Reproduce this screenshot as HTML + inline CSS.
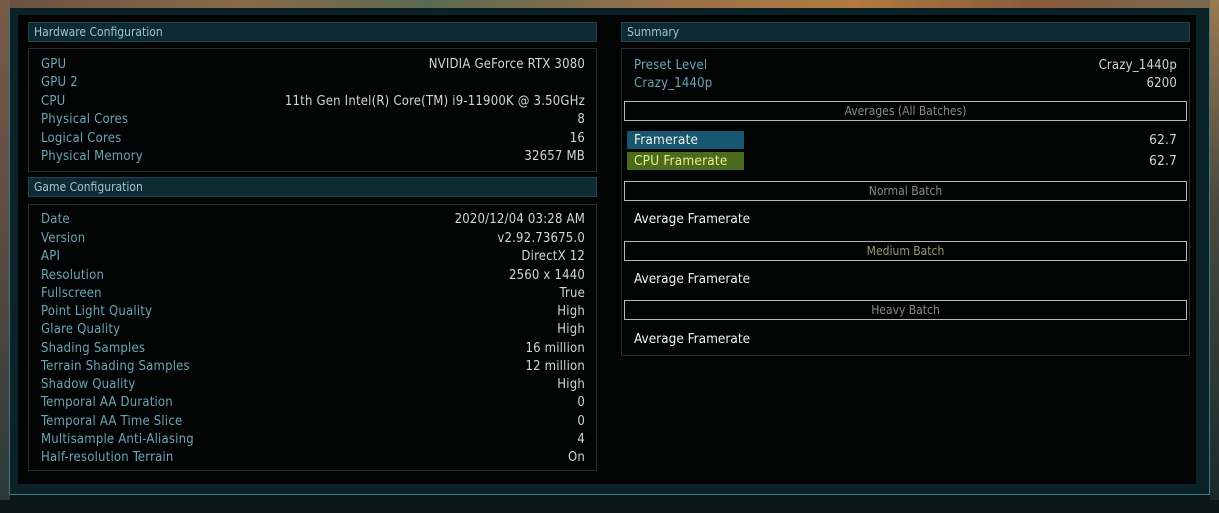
<!DOCTYPE html>
<html><head><meta charset="utf-8"><style>
*{margin:0;padding:0;box-sizing:border-box}
body{width:1219px;height:513px;overflow:hidden;background:#0a171b;font-family:"DejaVu Sans Condensed","Liberation Sans",sans-serif;font-size:13px;position:relative}
.abs{position:absolute}
.top{left:0;top:0;width:1219px;height:9px;background:linear-gradient(90deg,#6a5040,#8a6a48 20%,#5a6a50 35%,#9a7048 55%,#b07a40 70%,#8a5a3a 85%,#7a6a50)}
.lft{left:0;top:0;width:10px;height:500px;background:linear-gradient(#7a5a48,#5a4a40 50%,#2a3a3a)}
.rgt{left:1210px;top:0;width:9px;height:500px;background:linear-gradient(#9a7a50,#4a4a40 40%,#1a2a2a)}
.frame{left:9px;top:8px;width:1201px;height:487px;background:#0a2228;border:1px solid #3d7a82;border-top:none}
.inner{left:18px;top:15px;width:1178px;height:469px;background:#020303}
.hdr{height:20px;background:#0e2a32;border:1px solid #1f4650;color:#9cc4cf;font-size:12px;line-height:18px;padding-left:5px}
.box{border:1px solid #252e31}
.row{position:absolute;height:18px;line-height:18px;color:#6aa6b6;letter-spacing:0.2px}
.row span{position:absolute;right:0;color:#d4d4d4}
.bb{position:absolute;left:624px;width:563px;height:20px;border:1px solid #b8b8b8;text-align:center;line-height:18px;color:#8a8a8a;font-size:12px}
.af{position:absolute;left:634px;color:#f2f2f2;font-size:13.5px}
</style></head><body>
<div class="abs top"></div><div class="abs lft"></div><div class="abs rgt"></div>
<div class="abs frame"></div>
<div class="abs inner"></div>

<div class="abs hdr" style="left:28px;top:22px;width:569px">Hardware Configuration</div>
<div class="abs box" style="left:28px;top:48px;width:569px;height:124px"></div>
<div class="abs hdr" style="left:28px;top:177px;width:569px">Game Configuration</div>
<div class="abs box" style="left:28px;top:204px;width:569px;height:267px"></div>

<div class="abs hdr" style="left:621px;top:22px;width:569px">Summary</div>
<div class="abs box" style="left:621px;top:48px;width:569px;height:308px"></div>

<div class="row" style="left:41px;top:56px;width:544px">GPU<span>NVIDIA GeForce RTX 3080</span></div>
<div class="row" style="left:41px;top:74px;width:544px">GPU 2<span></span></div>
<div class="row" style="left:41px;top:93px;width:544px">CPU<span>11th Gen Intel(R) Core(TM) i9-11900K @ 3.50GHz</span></div>
<div class="row" style="left:41px;top:111px;width:544px">Physical Cores<span>8</span></div>
<div class="row" style="left:41px;top:130px;width:544px">Logical Cores<span>16</span></div>
<div class="row" style="left:41px;top:148px;width:544px">Physical Memory<span>32657 MB</span></div>

<div class="row" style="left:41px;top:211px;width:544px">Date<span>2020/12/04 03:28 AM</span></div>
<div class="row" style="left:41px;top:230px;width:544px">Version<span>v2.92.73675.0</span></div>
<div class="row" style="left:41px;top:248px;width:544px">API<span>DirectX 12</span></div>
<div class="row" style="left:41px;top:267px;width:544px">Resolution<span>2560 x 1440</span></div>
<div class="row" style="left:41px;top:285px;width:544px">Fullscreen<span>True</span></div>
<div class="row" style="left:41px;top:303px;width:544px">Point Light Quality<span>High</span></div>
<div class="row" style="left:41px;top:321px;width:544px">Glare Quality<span>High</span></div>
<div class="row" style="left:41px;top:340px;width:544px">Shading Samples<span>16 million</span></div>
<div class="row" style="left:41px;top:358px;width:544px">Terrain Shading Samples<span>12 million</span></div>
<div class="row" style="left:41px;top:376px;width:544px">Shadow Quality<span>High</span></div>
<div class="row" style="left:41px;top:394px;width:544px">Temporal AA Duration<span>0</span></div>
<div class="row" style="left:41px;top:413px;width:544px">Temporal AA Time Slice<span>0</span></div>
<div class="row" style="left:41px;top:431px;width:544px">Multisample Anti-Aliasing<span>4</span></div>
<div class="row" style="left:41px;top:449px;width:544px">Half-resolution Terrain<span>On</span></div>

<div class="row" style="left:634px;top:57px;width:543px">Preset Level<span>Crazy_1440p</span></div>
<div class="row" style="left:634px;top:75px;width:543px">Crazy_1440p<span>6200</span></div>
<div class="bb" style="top:101px">Averages (All Batches)</div>
<div class="abs" style="left:627px;top:131px;width:117px;height:18px;background:#17566e"></div>
<div class="abs" style="left:627px;top:152px;width:117px;height:18px;background:#4a6a1e"></div>
<div class="row" style="left:634px;top:131px;width:543px;color:#f0f0f0;font-size:13.5px">Framerate<span>62.7</span></div>
<div class="row" style="left:634px;top:152px;width:543px;color:#e8f08a;font-size:13.5px">CPU Framerate<span>62.7</span></div>
<div class="bb" style="top:181px">Normal Batch</div>
<div class="af" style="top:211px">Average Framerate</div>
<div class="bb" style="top:241px;color:#9a9870">Medium Batch</div>
<div class="af" style="top:271px">Average Framerate</div>
<div class="bb" style="top:300px">Heavy Batch</div>
<div class="af" style="top:331px">Average Framerate</div>
</body></html>
